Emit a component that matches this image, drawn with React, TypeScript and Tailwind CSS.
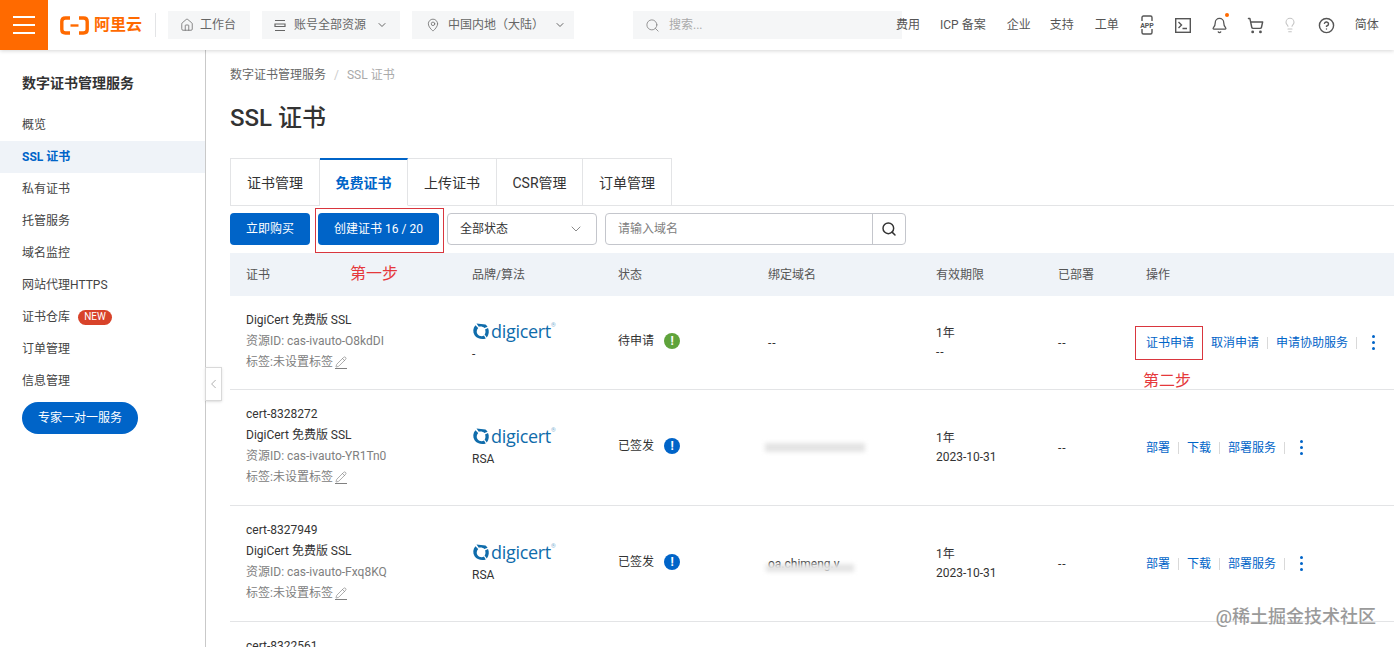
import { Bell, ChevronDown, ChevronLeft, CircleHelp, House, Lightbulb, MapPin, Pencil, Search, ShoppingCart } from 'lucide-react';

const sideItems = ['概览', 'SSL 证书', '私有证书', '托管服务', '域名监控', '网站代理HTTPS', '证书仓库', '订单管理', '信息管理'];
const tabs = [
  { label: '证书管理', width: 'w-[90px]' },
  { label: '免费证书', width: 'w-[88px]' },
  { label: '上传证书', width: 'w-[89px]' },
  { label: 'CSR管理', width: 'w-[86px]' },
  { label: '订单管理', width: 'w-[89px]' },
];
const columns = ['证书', '品牌/算法', '状态', '绑定域名', '有效期限', '已部署', '操作'];
const gridCols = 'grid grid-cols-[226px_146px_150px_168px_122px_88px_1fr]';

const rows = [
  { name: '', id: 'cas-ivauto-O8kdDI', algo: '-', status: '待申请', color: 'bg-[#5fa33b]', domain: '--', end: '--', height: 'h-[94px]', pending: true },
  { name: 'cert-8328272', id: 'cas-ivauto-YR1Tn0', algo: 'RSA', status: '已签发', color: 'bg-[#0064c8]', domain: 'blur1', end: '2023-10-31', height: 'h-[116px]', pending: false },
  { name: 'cert-8327949', id: 'cas-ivauto-Fxq8KQ', algo: 'RSA', status: '已签发', color: 'bg-[#0064c8]', domain: 'blur2', end: '2023-10-31', height: 'h-[116px]', pending: false },
];

function Pill({ children, className }: { children: React.ReactNode; className: string }) {
  return <div className={`flex items-center h-7 bg-[#f5f6f7] text-[#666] text-xs ${className}`}>{children}</div>;
}

function AliyunLogo() {
  return (
    <div className="flex items-center gap-[5px] text-[#ff6a00]">
      <svg width="29" height="19" viewBox="0 0 29 19" fill="none" stroke="#ff6a00" strokeWidth="3.4">
        <path d="M10 2H5.5C3.3 2 1.8 3.4 1.8 5.5v8c0 2.1 1.5 3.5 3.7 3.5H10" />
        <path d="M19 2h4.5c2.2 0 3.7 1.4 3.7 3.5v8c0 2.1-1.5 3.5-3.7 3.5H19" />
        <path d="M10.5 9.5h8" strokeWidth="2.4" />
      </svg>
      <span className="text-base leading-none font-bold">阿里云</span>
    </div>
  );
}

function AppIcon() {
  return (
    <svg width="16" height="20" viewBox="0 0 16 20" fill="none" stroke="#555" strokeWidth="1.4">
      <path d="M3 6V2.5C3 1.6 3.6 1 4.5 1h7c.9 0 1.5.6 1.5 1.5V6M3 14v3.5c0 .9.6 1.5 1.5 1.5h7c.9 0 1.5-.6 1.5-1.5V14" />
      <text x="8" y="12.5" textAnchor="middle" fontSize="7" fill="#555" stroke="none" fontWeight="700">APP</text>
    </svg>
  );
}

function TerminalIcon() {
  return (
    <svg width="16" height="15" viewBox="0 0 16 15" fill="none" stroke="#555" strokeWidth="1.4">
      <rect x="0.7" y="0.7" width="14.6" height="13.6" />
      <path d="M3.5 4l3 3-3 3M7.5 10.5H12" />
    </svg>
  );
}

function DigicertLogo() {
  return (
    <div className="flex items-center h-6 text-[#0f6cab]">
      <svg width="18" height="18" viewBox="0 0 18 18" fill="#0f6cab">
        {/* two tapered arcs of the swirl */}
        <path d="M4.5 1.5 L13.5 2.5 C14.2 3 15 3.8 15.6 4.8 L12.4 6 C11 4.6 8.8 4.1 6.8 4.8 Z" />
        <path d="M3.4 3.2 L6.2 6 C4.5 7.8 4.3 10.2 5.4 12 C7 14.2 10 14.8 12 13.6 L13.8 16.4 C9.8 17.8 5 16.6 2.6 13.2 C0.6 10 0.9 6 3.4 3.2 Z" />
        <path d="M16 6 C17.4 9 17 12.6 14.8 15.6 L12.6 12.6 C13.6 11 13.8 9.2 13 7.4 Z" />
      </svg>
      <span className="text-lg leading-none ml-px font-['Open_Sans',sans-serif] tracking-[-0.3px]">digicert</span>
      <span className="text-[6px] leading-none self-start mt-[3px] text-[#7fb2d4]">®</span>
    </div>
  );
}

function AlertDot({ color }: { color: string }) {
  return (
    <span className={`flex items-center justify-center w-4 h-4 rounded-full text-white text-xs font-bold leading-none ${color}`}>!</span>
  );
}

function Sep() {
  return <span className="w-px h-3 bg-[#d9d9d9] mx-2" />;
}

function Dots() {
  return (
    <span className="flex flex-col gap-[3px] ml-[7px]">
      <span className="w-[3px] h-[3px] rounded-full bg-[#0064c8]" />
      <span className="w-[3px] h-[3px] rounded-full bg-[#0064c8]" />
      <span className="w-[3px] h-[3px] rounded-full bg-[#0064c8]" />
    </span>
  );
}

function Domain({ value }: { value: string }) {
  if (value === '--') return <span className="tracking-[1px]">--</span>;
  if (value === 'blur1') {
    return <div className="ml-[-3px] w-[100px] h-[9px] bg-[#e4e4e4] blur-[2px]" />;
  }
  return (
    <div className="relative">
      oa.chimeng.v
      <span className="absolute left-[-2px] top-[8px] w-[88px] h-[8px] bg-[#e4e4e4] blur-[2px]" />
    </div>
  );
}

function CertRow({ row }: { row: (typeof rows)[number] }) {
  return (
    <div className={`${gridCols} ${row.height} border-b border-[#e3e4e6] text-xs text-[#333]`}>
      <div className="flex flex-col justify-center pl-4 pb-[3px] leading-[21px]">
        {row.name && <div>{row.name}</div>}
        <div>DigiCert 免费版 SSL</div>
        <div className="text-[#808080]">资源ID: {row.id}</div>
        <div className="flex items-center text-[#808080]">
          标签:未设置标签
          <Pencil className="w-3 h-[13px] ml-[2px] border-b border-[#808080]" strokeWidth={1.3} />
        </div>
      </div>
      <div className="flex flex-col justify-center pl-4 pb-[3px]">
        <DigicertLogo />
        <div className="leading-[18px] mt-[2px]">{row.algo}</div>
      </div>
      <div className="flex items-center pl-4 pb-[3px]">
        <span className="w-[46px]">{row.status}</span>
        <AlertDot color={row.color} />
      </div>
      <div className="flex items-center pl-4">
        <Domain value={row.domain} />
      </div>
      <div className="flex flex-col justify-center pl-4 leading-[19px]">
        <div>1年</div>
        <div className={row.end === '--' ? 'tracking-[1px]' : ''}>{row.end}</div>
      </div>
      <div className="flex items-center pl-4 tracking-[1px]">--</div>
      <div className="flex items-center pl-4 text-[#0064c8]">
        {row.pending ? (
          <>
            <span className="relative">
              证书申请
              <span className="absolute left-[-11px] top-[-9px] w-[68px] h-[34px] border border-[#d9363e]" />
              <span className="absolute left-[-3px] top-[36px] whitespace-nowrap text-base leading-5 text-[#e5383b]">第二步</span>
            </span>
            <span className="ml-[17px]">取消申请</span>
            <Sep />
            <span>申请协助服务</span>
            <Sep />
            <Dots />
          </>
        ) : (
          <>
            <span>部署</span>
            <Sep />
            <span>下载</span>
            <Sep />
            <span>部署服务</span>
            <Sep />
            <Dots />
          </>
        )}
      </div>
    </div>
  );
}

export default function App() {
  return (
    <div className="relative h-[647px] w-[1394px] overflow-hidden bg-white font-['Roboto','Noto_Sans_CJK_SC',sans-serif]">
      {/* Top bar */}
      <header className="relative z-10 flex items-center h-[50px] bg-white shadow-[0_1px_4px_rgba(0,0,0,0.16)]">
        <div className="flex flex-col justify-center gap-[6px] w-[48px] h-[50px] px-[13px] bg-[#ff6a00]">
          <span className="h-[2px] bg-white" />
          <span className="h-[2px] bg-white" />
          <span className="h-[2px] bg-white" />
        </div>
        <div className="ml-[12px]"><AliyunLogo /></div>
        <span className="w-px h-6 bg-[#e3e4e6] ml-[13px] mr-3" />
        <Pill className="w-[82px] pl-3">
          <House className="w-[14px] h-[14px] mr-[6px]" strokeWidth={1.3} />工作台
        </Pill>
        <Pill className="w-[138px] ml-3 pl-3">
          <svg width="12" height="13" viewBox="0 0 12 13" fill="none" stroke="#666" strokeWidth="1.2" className="mr-[8px]">
            <path d="M1 1.5h10M1 5h10v2.5H1zM1 11.5h10" />
          </svg>
          账号全部资源
          <ChevronDown className="w-3 h-3 ml-[10px]" />
        </Pill>
        <Pill className="w-[162px] ml-3 pl-[14px]">
          <MapPin className="w-[14px] h-[14px] mr-[8px]" strokeWidth={1.3} />中国内地（大陆）
          <ChevronDown className="w-3 h-3 ml-[10px]" />
        </Pill>
        <div className="flex items-center w-[269px] h-7 ml-[59px] pl-3 bg-[#f5f6f7] text-xs text-[#aaa]">
          <Search className="w-[15px] h-[15px] mr-[9px] text-[#888]" strokeWidth={1.4} />搜索...
        </div>
        <nav className="flex items-center ml-[-6px] text-xs text-[#555] whitespace-nowrap">
          <span className="w-6">费用</span>
          <span className="ml-[20px]">ICP 备案</span>
          <span className="ml-[21px]">企业</span>
          <span className="ml-[19px]">支持</span>
          <span className="ml-[21px]">工单</span>
          <span className="ml-[20px] flex"><AppIcon /></span>
          <span className="ml-[20px] flex"><TerminalIcon /></span>
          <span className="relative ml-[20px] flex">
            <Bell className="w-[17px] h-[17px]" strokeWidth={1.8} />
            <span className="absolute right-[-1px] top-[-4px] w-1 h-1 rounded-full bg-[#ff6a00]" />
          </span>
          <ShoppingCart className="w-[17px] h-[17px] ml-[19px]" strokeWidth={2} />
          <Lightbulb className="w-4 h-4 ml-[18px] text-[#c4c4c4]" strokeWidth={1.6} />
          <CircleHelp className="w-[17px] h-[17px] ml-[20px]" strokeWidth={2} />
          <span className="ml-5">简体</span>
        </nav>
      </header>

      <div className="flex h-[597px]">
        {/* Sidebar */}
        <aside className="relative w-[206px] shrink-0 border-r border-[#c9c9c9]">
          <h2 className="pl-[22px] pt-[24px] pb-[17px] text-sm leading-[18px] font-bold text-[#333]">数字证书管理服务</h2>
          <ul className="text-xs text-[#444]">
            {sideItems.map(item => (
              <li
                key={item}
                className={`flex items-center h-8 pl-[22px] ${item === 'SSL 证书' ? 'bg-[#eff3f8] font-bold text-[#0064c8]' : ''}`}
              >
                {item}
                {item === '证书仓库' && (
                  <span className="ml-2 flex items-center justify-center w-[34px] h-[15px] rounded-full bg-[#d8432a] text-[10px] text-white">NEW</span>
                )}
              </li>
            ))}
          </ul>
          <button className="ml-[22px] mt-[5px] w-[116px] h-8 rounded-full bg-[#0064c8] text-xs text-white">专家一对一服务</button>
          <div className="absolute left-[205px] top-[317px] flex items-center justify-center w-[17px] h-[34px] bg-white border border-[#d9d9d9] shadow-sm">
            <ChevronLeft className="w-4 h-4 text-[#aaa]" strokeWidth={1.5} />
          </div>
        </aside>

        {/* Main */}
        <main className="flex-1 pl-6">
          <div className="flex items-center h-[50px] text-xs">
            <span className="text-[#666]">数字证书管理服务</span>
            <span className="mx-2 text-[#ccc]">/</span>
            <span className="text-[#aaa]">SSL 证书</span>
          </div>
          <h1 className="mt-[3px] text-2xl leading-[30px] font-medium text-[#333]">SSL 证书</h1>

          <div className="flex mt-[25px] h-[48px] border-b border-[#e3e4e6]">
            {tabs.map((tab, i) => (
              <div
                key={tab.label}
                className={`flex items-center justify-center h-[48px] border-r border-[#e3e4e6] text-sm ${tab.width} ${
                  i === 0 ? 'border-l border-t' : ''
                } ${i === 1 ? 'border-t-2 border-t-[#0064c8] border-b border-b-white font-bold text-[#0064c8]' : 'border-t text-[#333]'}`}
              >
                {tab.label}
              </div>
            ))}
          </div>

          <div className="flex items-center gap-2 mt-[7px] h-8 text-xs">
            <button className="w-[80px] h-8 rounded-sm bg-[#0064c8] text-white">立即购买</button>
            <button className="relative w-[121px] h-8 rounded-sm bg-[#0064c8] text-white">
              创建证书 16 / 20
              <span className="absolute left-[-3px] top-[-5px] w-[129px] h-[45px] border border-[#d9363e]" />
            </button>
            <div className="flex items-center justify-between w-[150px] h-8 px-3 border border-[#c4c6cc] rounded-sm text-[#333]">
              全部状态
              <ChevronDown className="w-4 h-4 text-[#777]" strokeWidth={1.3} />
            </div>
            <div className="flex w-[301px] h-8 border border-[#c4c6cc] rounded-sm">
              <div className="flex flex-1 items-center pl-3 text-[#808080]">请输入域名</div>
              <div className="flex items-center justify-center w-[33px] border-l border-[#c4c6cc]">
                <Search className="w-4 h-4 text-[#333]" strokeWidth={2.2} />
              </div>
            </div>
          </div>

          <div className={`${gridCols} relative items-center mt-2 h-[43px] bg-[#eff3f8] text-xs text-[#555]`}>
            {columns.map(col => (
              <div key={col} className="pl-4">{col}</div>
            ))}
            <span className="absolute left-[120px] top-[11px] text-base leading-5 text-[#e5383b]">第一步</span>
          </div>

          {rows.map(row => (
            <CertRow key={row.id} row={row} />
          ))}
          <div className="pl-4 pt-4 text-xs text-[#333]">cert-8322561</div>
        </main>
      </div>

      {/* Watermark */}
      <div className="absolute right-[18px] bottom-[18px] text-lg leading-[24px] font-medium text-[#9a9a9a]">@稀土掘金技术社区</div>
    </div>
  );
}
